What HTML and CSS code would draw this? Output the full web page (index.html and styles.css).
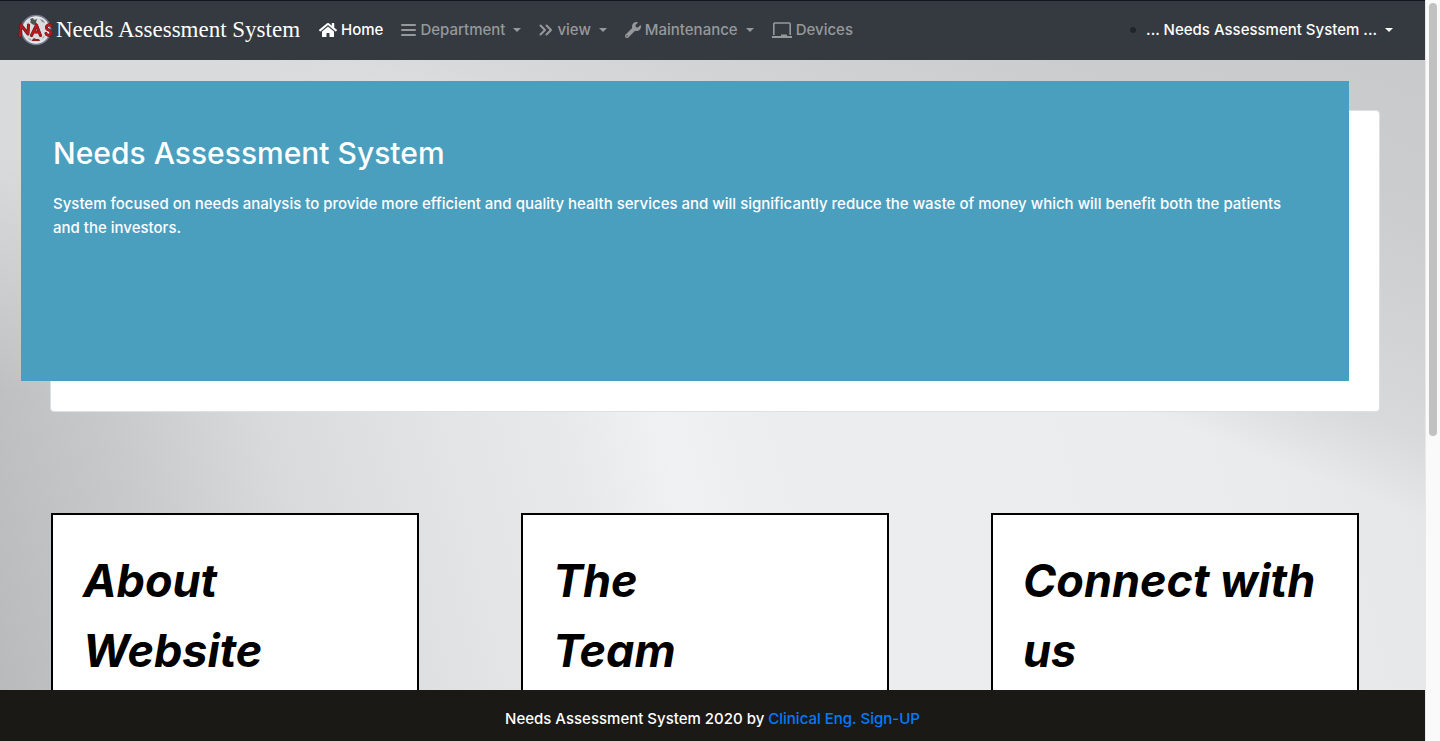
FILE: index.html
```html
<!DOCTYPE html>
<html lang="en">
<head>
<meta charset="utf-8">
<title>Needs Assessment System</title>
<link rel="stylesheet" href="styles.css">
</head>
<body>
<div class="page">
  <header class="navbar">
    <a class="brand" href="#">
      <svg class="brand-logo" viewBox="0 0 36 32" aria-hidden="true">
        <circle cx="18" cy="16" r="14.500" fill="#d9dbdc" stroke="#777b92" stroke-width="1.600"/>
        <circle cx="18" cy="16" r="13" fill="none" stroke="#eceeee"/>
        <path d="M12 5l3-1 1 2 3-1-1 3 1 2-3 1-2-1-2-2 1-1z" fill="#4d5552"/>
        <path d="M22 5l3 1 2 3-3-1z" fill="#8c9191"/>
        <path d="M10 24l3 1 1 2-3-1zM24 23l3-1-2 3z" fill="#a9adaf"/>
        <path d="M14 26l2-2 2 1h3l1 2h-8z" fill="#8d2025"/>
        <g fill="none" stroke-linecap="round" stroke-linejoin="round">
          <path d="M2 22L3 11L10 20L10.500 11M13.500 21.500L18.500 11L22.500 21.500M15.500 18H21M33.500 11.500C30 9.500 27.500 12.500 29 15C31 16.500 34.500 17 33 20C31.500 22 28.500 21.500 28 19.500" stroke="#5d1519" stroke-width="3"/>
          <path d="M2 22L3 11L10 20L10.500 11M13.500 21.500L18.500 11L22.500 21.500M15.500 18H21M33.500 11.500C30 9.500 27.500 12.500 29 15C31 16.500 34.500 17 33 20C31.500 22 28.500 21.500 28 19.500" stroke="#b8191f" stroke-width="2"/>
        </g>
      </svg>
      <span>Needs Assessment System</span>
    </a>
    <nav class="menu">
      <a class="menu-link active" href="#">
        <svg class="icon-home" viewBox="0 0 576 512" aria-hidden="true"><path fill="currentColor" d="M280.370 148.260L96 300.110V464a16 16 0 0 0 16 16l112.060-.29a16 16 0 0 0 15.920-16V368a16 16 0 0 1 16-16h64a16 16 0 0 1 16 16v95.640a16 16 0 0 0 16 16.050L464 480a16 16 0 0 0 16-16V300L295.670 148.260a12.190 12.190 0 0 0-15.300 0zM571.600 251.470L488 182.560V44.050a12 12 0 0 0-12-12h-56a12 12 0 0 0-12 12v72.610L318.470 43a48 48 0 0 0-61 0L4.340 251.470a12 12 0 0 0-1.600 16.900l25.500 31A12 12 0 0 0 45.150 301l235.220-193.740a12.190 12.190 0 0 1 15.300 0L530.900 301a12 12 0 0 0 16.900-1.600l25.500-31a12 12 0 0 0-1.700-16.930z"/></svg>
        <span>Home</span>
      </a>
      <button class="menu-link caret" type="button">
        <svg class="icon-bars" viewBox="0 0 15 14" aria-hidden="true"><path d="M1 2h13M1 7h13M1 12h13" stroke="currentColor" stroke-width="2" stroke-linecap="round"/></svg>
        <span>Department</span>
      </button>
      <button class="menu-link caret" type="button">
        <svg class="icon-view" viewBox="0 0 14 12" aria-hidden="true"><path d="M1.500 1.500L6 6l-4.500 4.500M7.500 1.500L12 6l-4.500 4.500" fill="none" stroke="currentColor" stroke-width="2" stroke-linecap="round" stroke-linejoin="round"/></svg>
        <span>view</span>
      </button>
      <button class="menu-link caret" type="button">
        <svg class="icon-wrench" viewBox="0 0 512 512" aria-hidden="true"><path fill="currentColor" d="M507.730 109.100c-2.240-9.030-13.540-12.090-20.120-5.510l-74.360 74.360-67.880-11.310-11.310-67.880 74.360-74.360c6.620-6.620 3.430-17.900-5.660-20.160-47.380-11.740-99.550.91-136.580 37.930-39.640 39.640-50.550 97.100-34.050 147.200L18.740 402.760c-24.990 24.990-24.990 65.510 0 90.500 24.990 24.990 65.510 24.990 90.500 0l213.210-213.210c50.120 16.710 107.470 5.680 147.370-34.220 37.070-37.070 49.700-89.320 37.910-136.730zM64 472c-13.250 0-24-10.750-24-24 0-13.260 10.750-24 24-24s24 10.740 24 24c0 13.250-10.750 24-24 24z"/></svg>
        <span>Maintenance</span>
      </button>
      <a class="menu-link" href="#">
        <svg class="icon-device" viewBox="0 0 20 16" aria-hidden="true"><path d="M1.800 13V2a1 1 0 0 1 1-1h14.400a1 1 0 0 1 1 1v11" fill="none" stroke="currentColor" stroke-width="1.600"/><path d="M0 14h9v-1.500h6V14h5v2H0z" fill="currentColor"/></svg>
        <span>Devices</span>
      </a>
    </nav>
    <ul class="account">
      <li><button class="menu-link active caret" type="button"><span>... Needs Assessment System ...</span></button></li>
    </ul>
  </header>
  <main class="content">
    <section class="hero">
      <div class="hero-panel">
        <h1>Needs Assessment System</h1>
        <p>System focused on needs analysis to provide more efficient and quality health services and will significantly reduce the waste of money which will benefit both the patients and the investors.</p>
      </div>
    </section>
    <section class="cards">
      <article class="card"><h2>About<br>Website</h2></article>
      <article class="card"><h2>The<br>Team</h2></article>
      <article class="card"><h2>Connect with us</h2></article>
    </section>
  </main>
  <footer class="footer">Needs Assessment System 2020 by&nbsp;<a href="#">Clinical Eng. Sign-UP</a></footer>
</div>
<div class="scroll-track" aria-hidden="true"><div class="scroll-thumb"></div></div>
</body>
</html>
```
FILE: styles.css
```css
* { box-sizing: border-box; }

body {
  margin: 0;
  height: 100vh;
  display: flex;
  overflow: hidden;
  font: 500 15px/24px Inter, "Liberation Sans", sans-serif;
  color: #212529;
}

.page {
  flex: 1;
  min-width: 0;
  display: flex;
  flex-direction: column;
}

.navbar {
  display: flex;
  align-items: center;
  height: 60px;
  flex: none;
  padding: 0 32px 2px 18px;
  background: #343a40;
  border-top: 1px solid #10151f;
}

.brand {
  display: flex;
  align-items: center;
  gap: 2px;
  color: #fff;
  font: 23px/36px "Liberation Serif", serif;
  text-decoration: none;
  white-space: nowrap;
}

.brand-logo { width: 36px; height: 32px; }

.menu {
  display: flex;
  align-items: center;
  gap: 18px;
  margin-left: 19px;
}

.menu-link {
  display: flex;
  align-items: center;
  gap: 4px;
  padding: 0;
  border: 0;
  background: none;
  color: #96999c;
  font: inherit;
  text-decoration: none;
  white-space: nowrap;
}

.menu-link.active { color: #fff; }

.caret::after {
  content: "";
  margin-left: 4px;
  border: 4px solid transparent;
  border-top-color: currentColor;
  border-bottom: 0;
}

.icon-home { width: 18px; height: 16px; }
.icon-bars { width: 15px; height: 14px; }
.icon-view { width: 14px; height: 12px; }
.icon-wrench { width: 16px; height: 16px; }
.icon-device { width: 20px; height: 16px; }

.account {
  margin: 0 0 0 auto;
  padding: 0;
  list-style: none;
}

.account li {
  display: flex;
  align-items: center;
  gap: 10px;
}

.account li::before {
  content: "";
  width: 6px;
  height: 6px;
  border-radius: 50%;
  background: #212529;
}

.content {
  flex: 1;
  min-height: 0;
  overflow: hidden;
  padding-top: 50px;
  background:
    linear-gradient(201deg, #c9cacc 0%, #cbccce 12%, #d2d3d5 24%, #d8d9db 32%, rgba(226, 227, 229, 0) 39%),
    radial-gradient(ellipse 640px 330px at 0 0, #d9dadc 30%, rgba(217, 218, 220, 0)),
    linear-gradient(77deg, #b9babc 0%, #c8c9cb 11%, #d9dadc 21%, #e3e4e6 32%, #e8e9eb 40%, #f0f1f3 46%, #ecedef 53%, #ebecee 80%, #e3e4e6 100%);
}

.hero {
  margin: 0 45px 0 50px;
  background: #fff;
  border: 1px solid #dedfe0;
  border-radius: 4px;
}

.hero-panel {
  min-height: 300px;
  margin: -30px 30px 30px -30px;
  padding: 53px 48px 53px 32px;
  background: #4a9ebe;
  color: #fff;
}

.hero h1 {
  margin: 0 0 20px;
  font-size: 30px;
  line-height: 38px;
  font-weight: 500;
}

.hero p { margin: 0; }

.cards {
  display: grid;
  grid-template-columns: repeat(3, 1fr);
  gap: 102px;
  margin: 101px 66px 0 51px;
}

.card {
  min-height: 368px;
  padding: 31px 30px;
  background: #fff;
  border: 2px solid #000;
}

.card h2 {
  margin: 0;
  color: #000;
  font-size: 45px;
  line-height: 70px;
  font-weight: 700;
  font-style: italic;
}

.footer {
  flex: none;
  display: flex;
  justify-content: center;
  height: 51px;
  padding-top: 17px;
  background: #1a1916;
  color: #fff;
}

.footer a {
  color: #007bff;
  text-decoration: none;
}

.scroll-track {
  flex: none;
  width: 15px;
  padding: 3px 3px 0 3px;
  background: #fafafa;
  border-left: 1px solid #e8e8e8;
}

.scroll-thumb {
  width: 8px;
  height: 433px;
  border-radius: 4px;
  background: #c1c1c1;
}
```
